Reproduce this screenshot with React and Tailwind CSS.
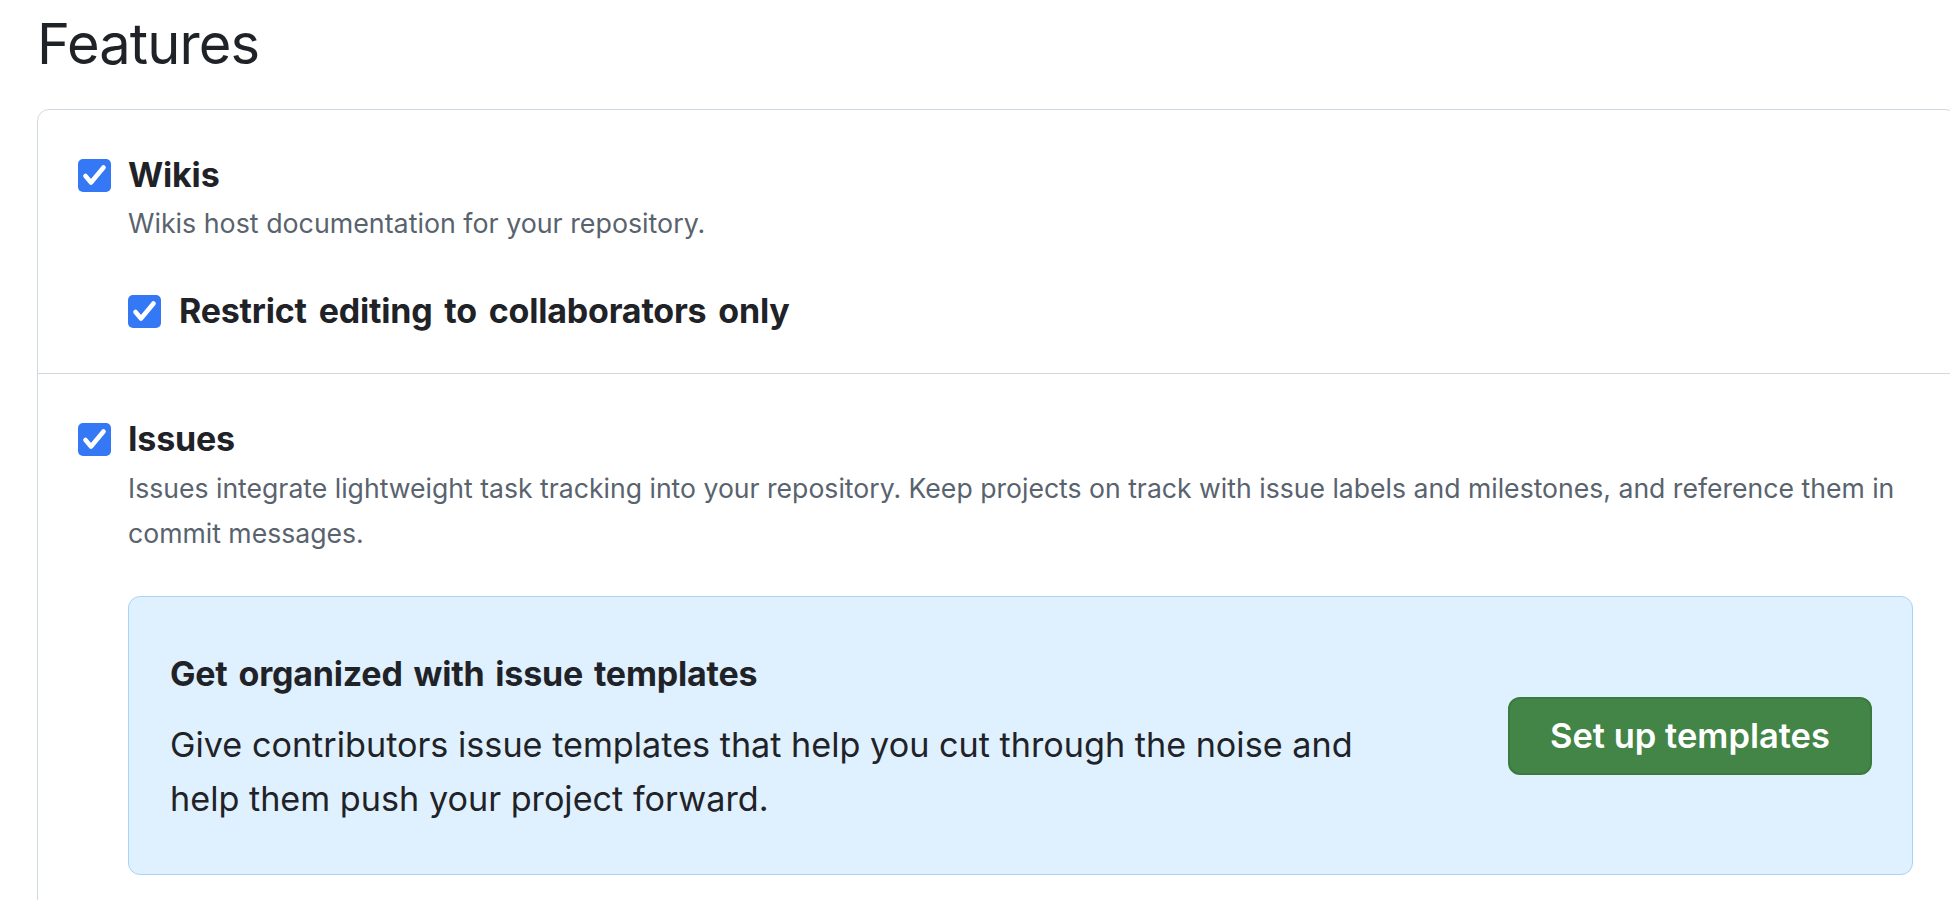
import React from "react";

function Check() {
  return (
    <svg viewBox="0 0 33 33" className="w-[33px] h-[33px] shrink-0">
      <rect x="0" y="0" width="33" height="33" rx="5" fill="#3478f6" />
      <path d="M7.5 17 L13 23.5 L25.5 8.5" fill="none" stroke="#fff" strokeWidth="4.6" strokeLinecap="round" strokeLinejoin="round" />
    </svg>
  );
}

export default function App() {
  return (
    <div className="w-[1950px] h-[900px] overflow-hidden bg-white text-[#1f2328] font-['Inter','Liberation_Sans',sans-serif]">
      <div className="pl-[37px]">
        <h2 className="mt-[9px] text-[56px] leading-[70px] font-normal tracking-[-0.9px]">Features</h2>

        <div className="mt-[30px] w-[1920px] border border-[#d1d9e0] rounded-[12px]">
          {/* wikis */}
          <div className="pl-[40px] pt-[45px] pb-[42px]">
            <label className="flex items-center gap-[17px]">
              <Check />
              <span className="text-[34px] leading-[40px] font-bold tracking-[-0.2px]">Wikis</span>
            </label>
            <p className="ml-[50px] mt-[8px] text-[26.8px] leading-[40px] text-[#59636e]">
              Wikis host documentation for your repository.
            </p>
            <label className="ml-[50px] mt-[48px] flex items-center gap-[18px]">
              <Check />
              <span className="text-[34px] leading-[40px] font-bold tracking-[-0.2px] [word-spacing:4px]">Restrict editing to collaborators only</span>
            </label>
          </div>

          <div className="border-t border-[#d1d9e0]" />

          {/* issues */}
          <div className="pl-[40px] pt-[45px] pb-[40px] pr-[20px]">
            <label className="flex items-center gap-[17px]">
              <Check />
              <span className="text-[34px] leading-[40px] font-bold tracking-[-0.2px]">Issues</span>
            </label>
            <p className="ml-[50px] mt-[7px] text-[26.6px] leading-[45px] text-[#59636e]">
              Issues integrate lightweight task tracking into your repository. Keep projects on track with issue labels and milestones, and reference them in commit messages.
            </p>

            <div className="ml-[50px] mt-[40px] w-[1785px] h-[279px] border border-[#a9d3f7] bg-[#dff0fe] rounded-[12px] flex items-center justify-between pl-[41px] pr-[40px]">
              <div className="pt-[9px]">
                <h3 className="text-[34px] leading-[40px] font-bold tracking-[-0.2px] [word-spacing:3px]">Get organized with issue templates</h3>
                <p className="mt-[24px] max-w-[1215px] text-[34.2px] leading-[54px]">
                  Give contributors issue templates that help you cut through the noise and help them push your project forward.
                </p>
              </div>
              <button className="w-[364px] h-[78px] rounded-[12px] bg-[#438546] border-2 border-[#3b7a3f] text-white text-[34.5px] font-semibold shrink-0">
                Set up templates
              </button>
            </div>
          </div>
        </div>
      </div>
    </div>
  );
}
